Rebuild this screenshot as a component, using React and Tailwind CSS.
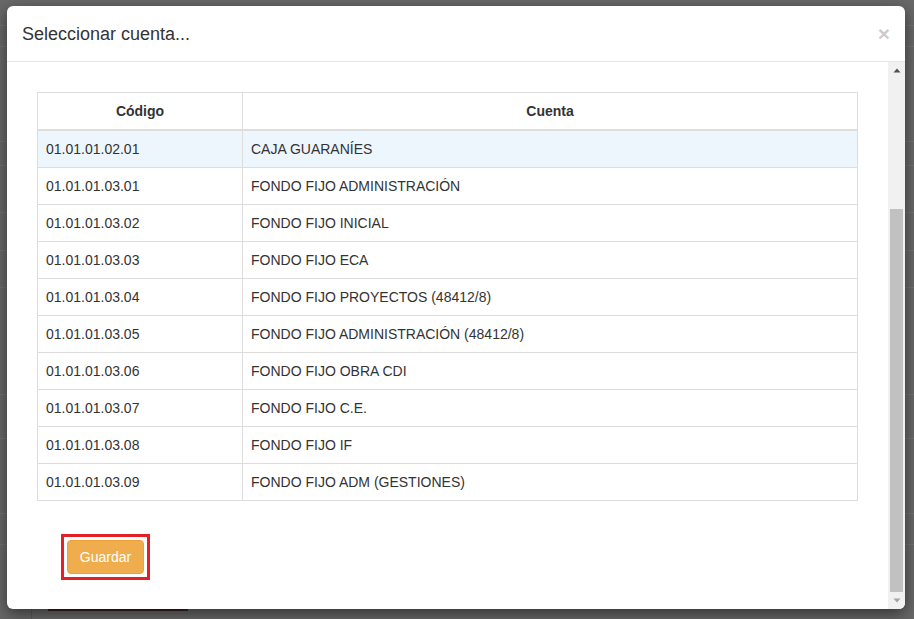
import React from "react";

const rows = [
  ["01.01.01.02.01", "CAJA GUARANÍES"],
  ["01.01.01.03.01", "FONDO FIJO ADMINISTRACIÓN"],
  ["01.01.01.03.02", "FONDO FIJO INICIAL"],
  ["01.01.01.03.03", "FONDO FIJO ECA"],
  ["01.01.01.03.04", "FONDO FIJO PROYECTOS (48412/8)"],
  ["01.01.01.03.05", "FONDO FIJO ADMINISTRACIÓN (48412/8)"],
  ["01.01.01.03.06", "FONDO FIJO OBRA CDI"],
  ["01.01.01.03.07", "FONDO FIJO C.E."],
  ["01.01.01.03.08", "FONDO FIJO IF"],
  ["01.01.01.03.09", "FONDO FIJO ADM (GESTIONES)"],
];

const bgLines = [26, 21, 95, 24, 47, 38, 37, 107, 44, 75, 31];

export default function App() {
  return (
    <div className="relative w-[914px] h-[619px] overflow-hidden bg-[#686868] font-['Liberation_Sans',Arial,sans-serif]">
      {/* page behind the overlay */}
      <div className="flex flex-col h-full">
        {bgLines.map((h, i) => (
          <div key={i} style={{ height: h }} className="border-b border-[#727272] shrink-0" />
        ))}
        <div className="mt-auto h-[10px] flex">
          <div className="w-[32px] border-r border-[#5a5a5a]" />
          <div className="ml-[16px] w-[140px] h-[2px] bg-[#3f2020]" />
        </div>
      </div>

      {/* modal */}
      <div className="absolute left-[7px] top-[6px] w-[898px] h-[603px] bg-white rounded-[6px] shadow-[0_5px_15px_rgba(0,0,0,0.5)] flex flex-col overflow-hidden">
        <div className="h-[56px] shrink-0 border-b border-[#e5e5e5] flex items-center justify-between px-[15px]">
          <h4 className="text-[18px] text-[#333] leading-[26px]">Seleccionar cuenta...</h4>
          <span className="text-[21px] font-bold text-black opacity-20 leading-none">×</span>
        </div>
        <div className="flex flex-1 min-h-0">
          <div className="flex-1 pl-[30px] pt-[30px] overflow-hidden">
            <div className="w-[821px] border-t border-l border-r border-[#ddd] text-[14px] text-[#333]">
              <div className="flex h-[38px] border-b-2 border-[#ddd] font-bold">
                <div className="w-[205px] border-r border-[#ddd] flex items-center justify-center">Código</div>
                <div className="flex-1 flex items-center justify-center">Cuenta</div>
              </div>
              {rows.map(([c, n], i) => (
                <div key={c} className={`flex h-[37px] border-b border-[#ddd] ${i === 0 ? "bg-[#eef6fd]" : ""}`}>
                  <div className="w-[205px] border-r border-[#ddd] flex items-center pl-[8px]">{c}</div>
                  <div className="flex-1 flex items-center pl-[8px]">{n}</div>
                </div>
              ))}
            </div>
            <div className="mt-[33px] ml-[24px] inline-flex border-[3px] border-[#e41f26] p-[3px]">
              <button className="w-[77px] h-[34px] bg-[#f0ad4e] border border-[#eea236] rounded-[4px] text-white text-[14px]">
                Guardar
              </button>
            </div>
          </div>
          {/* scrollbar */}
          <div className="w-[17px] shrink-0 bg-[#f1f1f1] flex flex-col">
            <div className="h-[17px] flex items-center justify-center">
              <svg width="8" height="5" viewBox="0 0 8 5"><path d="M4 0.5 L7.5 4.5 L0.5 4.5 Z" fill="#505050" /></svg>
            </div>
            <div className="flex-1 flex flex-col">
              <div className="h-[130px]" />
              <div className="flex-1 ml-[2px] mr-[2px] bg-[#c1c1c1]" />
            </div>
            <div className="h-[17px] flex items-center justify-center">
              <svg width="8" height="5" viewBox="0 0 8 5"><path d="M0.5 0.5 L7.5 0.5 L4 4.5 Z" fill="#a3a3a3" /></svg>
            </div>
          </div>
        </div>
      </div>
    </div>
  );
}
